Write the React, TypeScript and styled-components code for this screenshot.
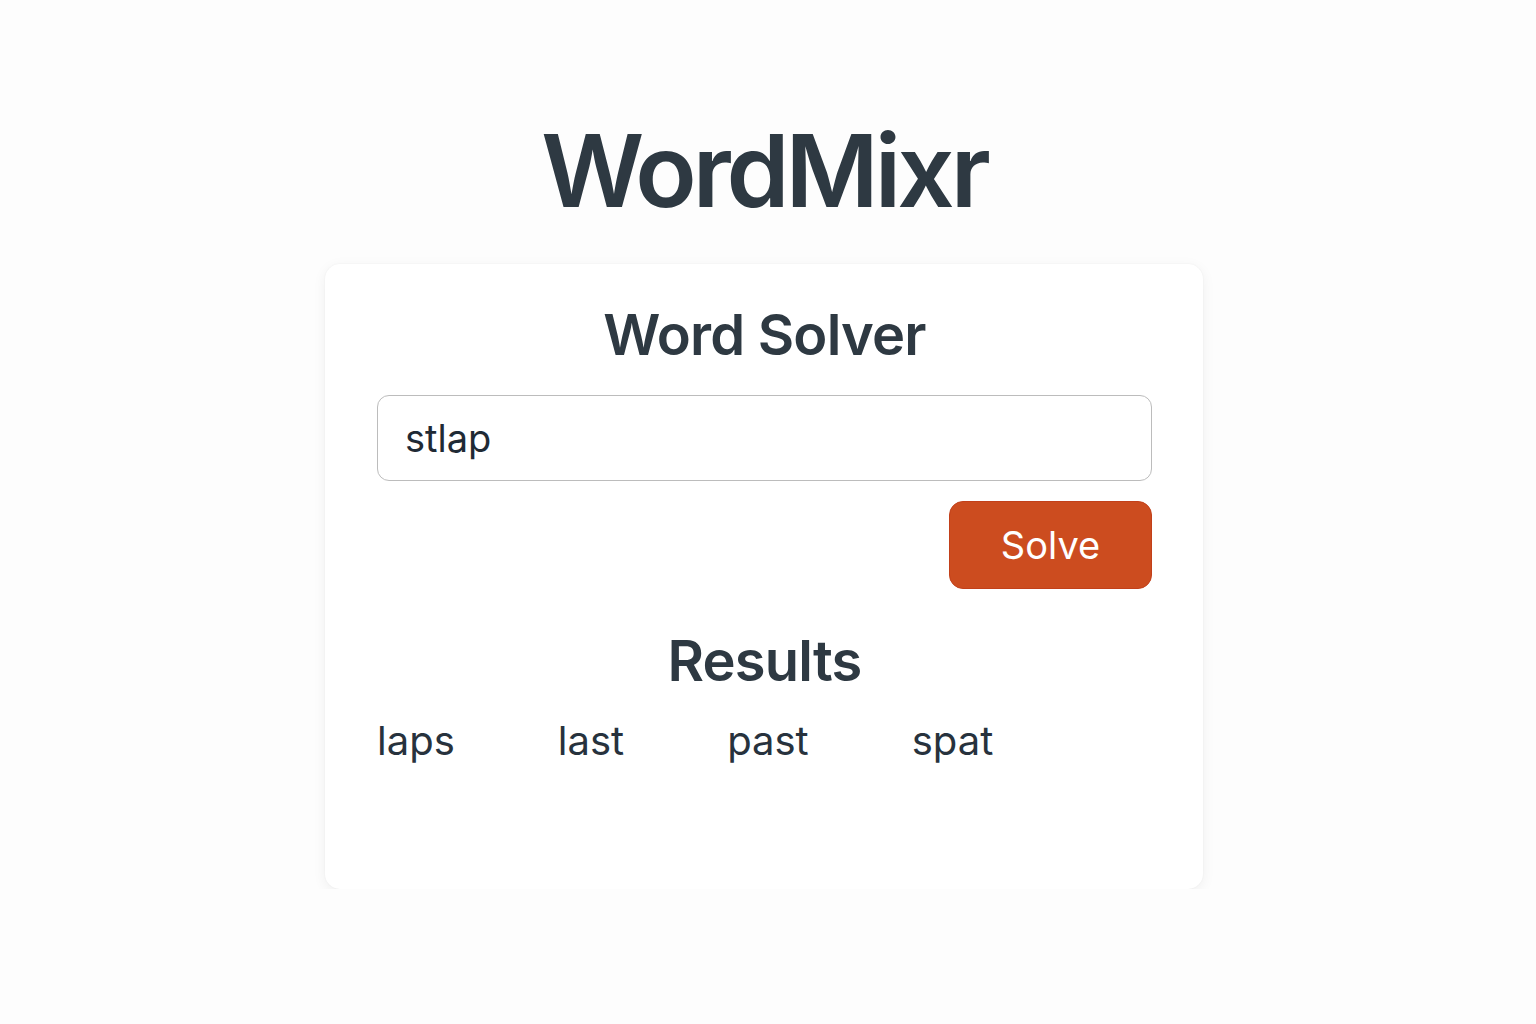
import React from "react";
import styled, { createGlobalStyle } from "styled-components";

const Global = createGlobalStyle`
  html, body { margin: 0; padding: 0; background: #fdfdfd; }
  body { font-family: Inter, "Noto Sans", "Liberation Sans", sans-serif; color: #2c3640; }
`;

const Page = styled.main`
  display: flex;
  flex-direction: column;
  align-items: center;
  padding: 112px 8px 0 0;
`;

const Title = styled.h1`
  margin: 0;
  font-size: 101px;
  font-weight: 600;
  line-height: 116px;
  letter-spacing: -4px;
  color: #2e3942;
`;

const Card = styled.section`
  margin-top: 36px;
  width: 878px;
  height: 625px;
  box-sizing: border-box;
  background: #ffffff;
  border-radius: 15px;
  box-shadow: 0 3px 14px rgba(0, 0, 0, 0.06), 0 0 2px rgba(0, 0, 0, 0.05);
  padding: 37px 51px 0 52px;
  display: flex;
  flex-direction: column;
`;

const Heading = styled.h2`
  margin: 0;
  text-align: center;
  font-size: 56px;
  font-weight: 600;
  line-height: 68px;
  letter-spacing: -0.8px;
  color: #2e3942;
`;

const Input = styled.input`
  margin-top: 26px;
  height: 86px;
  box-sizing: border-box;
  border: 1px solid #bcbcbc;
  border-radius: 12px;
  padding: 0 27px;
  font-family: Inter, "Noto Sans", sans-serif;
  font-size: 38px;
  color: #1f2a35;
  background: #fff;
  outline: none;
`;

const Actions = styled.div`
  display: flex;
  justify-content: flex-end;
  margin-top: 20px;
`;

const Button = styled.button`
  width: 203px;
  height: 88px;
  border: 1px solid #c2401a;
  border-radius: 14px;
  background: #cc4c1f;
  color: #ffffff;
  font-family: Inter, "Noto Sans", sans-serif;
  font-size: 38px;
  font-weight: 400;
  cursor: pointer;
`;

const ResultsHeading = styled(Heading)`
  margin-top: 38px;
`;

const Words = styled.ul`
  list-style: none;
  margin: 18px 0 0;
  padding: 0;
  display: flex;
  gap: 103px;
`;

const Word = styled.li`
  font-size: 40px;
  line-height: 56px;
  color: #27323d;
`;

const words = ["laps", "last", "past", "spat"];

export default function App() {
  return (
    <>
      <Global />
      <Page>
        <Title>WordMixr</Title>
        <Card>
          <Heading>Word Solver</Heading>
          <Input defaultValue="stlap" />
          <Actions>
            <Button>Solve</Button>
          </Actions>
          <ResultsHeading>Results</ResultsHeading>
          <Words>
            {words.map((w) => (
              <Word key={w}>{w}</Word>
            ))}
          </Words>
        </Card>
      </Page>
    </>
  );
}
